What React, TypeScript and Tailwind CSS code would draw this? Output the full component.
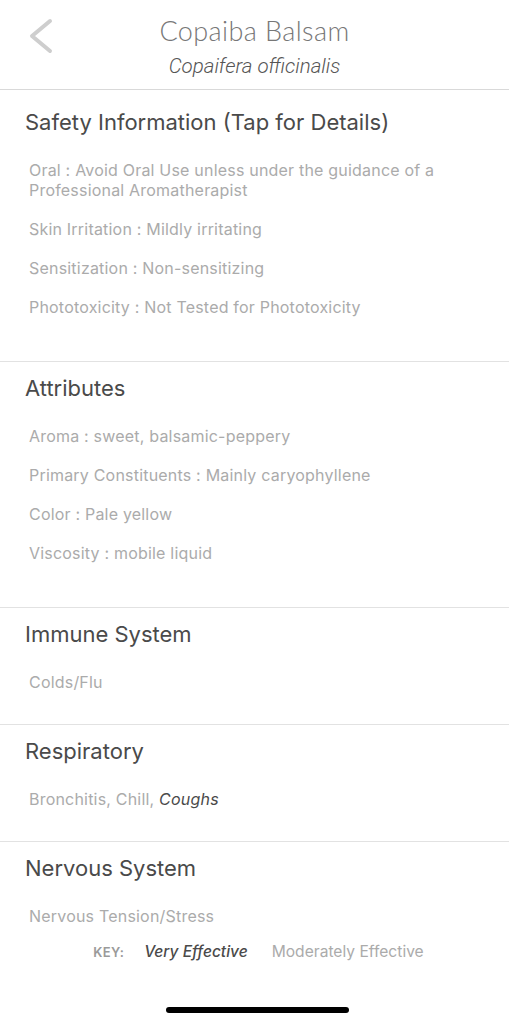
type Item = { label: string; value?: string; parts?: { text: string; strong?: boolean }[] };

const Section = ({
  title,
  items,
  top = "pt-[12px]",
  bottom = "pb-[44px]",
}: {
  title: string;
  items: Item[];
  top?: string;
  bottom?: string;
}) => (
  <section className={`border-b border-[#e2e2e2] mr-[5px] pl-[25px] ${top} ${bottom}`}>
    <h2 className="text-[22px] leading-[28px] text-[#4a4a4a]">{title}</h2>
    <div className="mt-[24px] pl-[4px] pr-[40px] flex flex-col gap-[19px]">
      {items.map((it, i) => (
        <p key={i} className="text-[16px] leading-[20px] tracking-[0.2px] text-[#ababab]">
          {it.parts
            ? it.parts.map((p, j) => (
                <span key={j} className={p.strong ? "italic text-[#4a4a4a]" : ""}>
                  {p.text}
                </span>
              ))
            : it.value
            ? `${it.label} : ${it.value}`
            : it.label}
        </p>
      ))}
    </div>
  </section>
);

export default function App() {
  return (
    <div className="relative w-[514px] h-[1024px] bg-white overflow-hidden" style={{ fontFamily: "Inter, 'Noto Sans', sans-serif" }}>
      <header className="relative h-[90px] border-b border-[#d9d9d9] mr-[5px] flex flex-col items-center">
        <svg className="absolute left-[28px] top-[18px]" width="26" height="36" viewBox="0 0 26 36" fill="none">
          <polyline points="22,3 4,18 22,33" stroke="#cecece" strokeWidth="4" strokeLinecap="round" strokeLinejoin="round" />
        </svg>
        <h1
          className="mt-[14px] text-[27px] leading-[34px] text-[#777] font-light tracking-[0.4px]"
          style={{ fontFamily: "Lato, sans-serif" }}
        >
          Copaiba Balsam
        </h1>
        <p
          className="mt-[6px] text-[20.5px] leading-[24px] italic font-light text-[#555]"
          style={{ fontFamily: "Roboto, sans-serif" }}
        >
          Copaifera officinalis
        </p>
      </header>

      <Section
        title="Safety Information (Tap for Details)"
        top="pt-[18px]"
        items={[
          { label: "Oral", value: "Avoid Oral Use unless under the guidance of a Professional Aromatherapist" },
          { label: "Skin Irritation", value: "Mildly irritating" },
          { label: "Sensitization", value: "Non-sensitizing" },
          { label: "Phototoxicity", value: "Not Tested for Phototoxicity" },
        ]}
      />
      <Section
        title="Attributes"
        items={[
          { label: "Aroma ", value: "sweet, balsamic-peppery" },
          { label: "Primary Constituents ", value: "Mainly caryophyllene" },
          { label: "Color", value: "Pale yellow" },
          { label: "Viscosity", value: "mobile liquid" },
        ]}
      />
      <Section title="Immune System" bottom="pb-[32px]" items={[{ label: "Colds/Flu" }]} />
      <Section
        title="Respiratory"
        bottom="pb-[32px]"
        items={[{ label: "", parts: [{ text: "Bronchitis, Chill, " }, { text: "Coughs", strong: true }] }]}
      />
      <section className="pl-[25px] pt-[12px]">
        <h2 className="text-[22px] leading-[28px] text-[#4a4a4a]">Nervous System</h2>
        <p className="mt-[24px] pl-[4px] text-[16px] leading-[20px] tracking-[0.2px] text-[#ababab]">Nervous Tension/Stress</p>
      </section>
      <div className="mt-[16px] ml-[3px] flex items-center justify-center text-[16px] leading-[20px]">
        <span className="text-[13px] font-semibold text-[#9a9a9a] tracking-wide">KEY:</span>
        <span className="ml-[20px] text-[15.5px] italic font-medium text-[#4a4a4a]">Very Effective</span>
        <span className="ml-[24px] text-[15.6px] text-[#ababab]">Moderately Effective</span>
      </div>

      <div className="absolute left-[166px] top-[1007px] w-[183px] h-[6px] rounded-full bg-black" />
    </div>
  );
}
